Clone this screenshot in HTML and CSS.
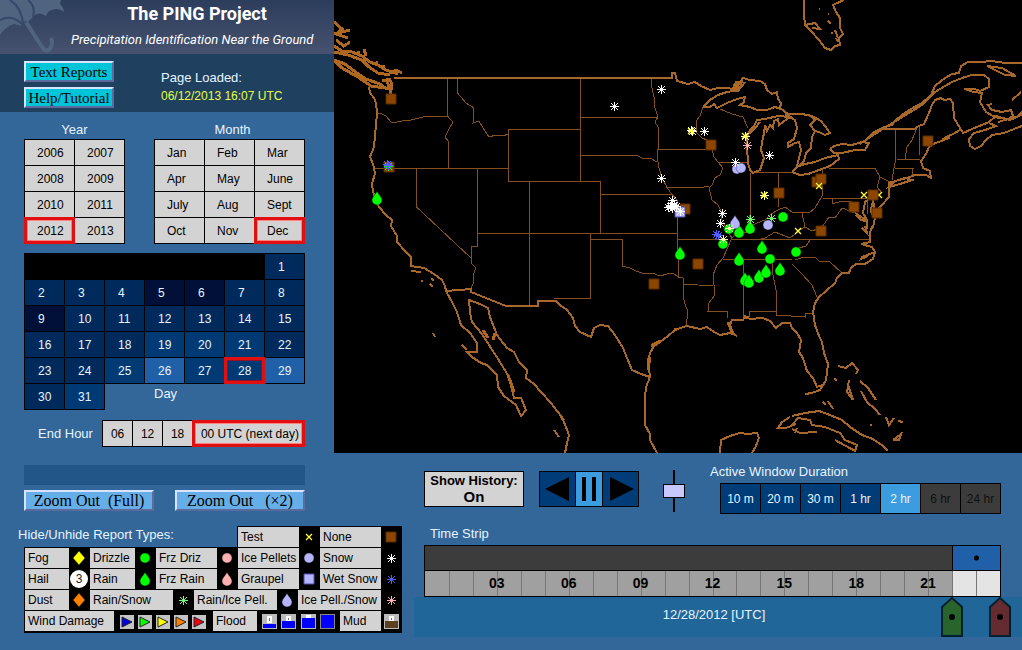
FILE: index.html
```
<!DOCTYPE html>
<html lang="en">
<head>
    <meta charset="UTF-8">
    <meta name="viewport" content="width=device-width, initial-scale=1.0">
    <title>The PING Project</title>
    <link rel="stylesheet" href="styles.css">
</head>
<body>

<!-- Shared report symbols, drawn around 0,0 -->
<svg class="symbols" aria-hidden="true">
    <defs>
        <g id="square"><path d="M-5-5H5V5H-5z" fill="#8c4600" stroke="#5c2c00"/></g>
        <g id="circle"><circle r="5" fill="currentColor" stroke="#000" stroke-opacity=".35"/></g>
        <g id="drop"><path d="M0-7C1-4 5-1 5 2A5 5 0 0 1-5 2C-5-1-1-4 0-7z" fill="currentColor" stroke="#000" stroke-opacity=".35"/></g>
        <g id="diamond"><path d="M0-7L6 0 0 7-6 0z" fill="currentColor" stroke="#000" stroke-opacity=".35"/></g>
        <g id="graupel"><path d="M-5-5H5V5H-5z" fill="#b4b4ff" stroke="#5050b0"/></g>
        <g id="flake"><path d="M.5-4V5M-4 .5H5M-3-3L4 4M-3 4L4-3" stroke="currentColor" fill="none"/></g>
        <g id="cross"><path d="M-3-3L3 3M-3 3L3-3" stroke="#ffff40" stroke-width="1.3" fill="none"/></g>
        <g id="wind"><path d="M0 0H14V14H0z" fill="#c4c4c4"/><path d="M2 2L12 7 2 12z" fill="currentColor" stroke="#222"/></g>
    </defs>
</svg>

<div class="top">
    <div class="sidebar">
        <div class="header">
            <svg class="umbrella" viewBox="0 0 54 54">
                <path d="M0 0H61L60 4Q64 8 64 12Q56 6 48 12L46 16Q38 10 32 18L28 22Q25 19 21 26L14 24Q5 27 0 35z" fill="#50647f"/>
                <path d="M10 0Q22 8 23 24M28 0Q36 6 33 17M0 20Q12 14 22 24" fill="none" stroke="#35476a" stroke-width="2"/>
                <path d="M26 22L42 47Q47 54 51 47Q53 43 51 38" fill="none" stroke="#50647f" stroke-width="4"/>
            </svg>
            <div class="titles">
                <h1>The PING Project</h1>
                <p>Precipitation Identification Near the Ground</p>
            </div>
        </div>

        <div class="links">
            <div class="link-buttons">
                <button class="bevel cyan">Text Reports</button>
                <button class="bevel cyan">Help/Tutorial</button>
            </div>
            <div class="loaded">
                <div>Page Loaded:</div>
                <div class="stamp">06/12/2013 16:07 UTC</div>
            </div>
        </div>

        <div class="pickers">
            <div class="picker">
                <div class="picker-title">Year</div>
                <div class="cells years">
                    <button>2006</button><button>2007</button>
                    <button>2008</button><button>2009</button>
                    <button>2010</button><button>2011</button>
                    <button class="selected">2012</button><button>2013</button>
                </div>
            </div>
            <div class="picker">
                <div class="picker-title">Month</div>
                <div class="cells months">
                    <button>Jan</button><button>Feb</button><button>Mar</button>
                    <button>Apr</button><button>May</button><button>June</button>
                    <button>July</button><button>Aug</button><button>Sept</button>
                    <button>Oct</button><button>Nov</button><button class="selected">Dec</button>
                </div>
            </div>
        </div>

        <div class="cells days">
            <div class="blank"></div>
            <button>1</button>
            <button>2</button><button>3</button><button>4</button><button class="few">5</button><button class="few">6</button><button>7</button><button>8</button>
            <button class="few">9</button><button>10</button><button>11</button><button>12</button><button>13</button><button>14</button><button>15</button>
            <button>16</button><button>17</button><button>18</button><button class="some">19</button><button class="some">20</button><button class="some">21</button><button>22</button>
            <button>23</button><button>24</button><button class="some">25</button><button class="many">26</button><button class="some">27</button><button class="some selected">28</button><button class="many">29</button>
            <button>30</button><button class="some">31</button>
            <div class="day-title">Day</div>
        </div>

        <div class="end-hour">
            <span>End Hour</span>
            <div class="cells hours">
                <button>06</button><button>12</button><button>18</button><button class="selected">00 UTC (next day)</button>
            </div>
        </div>
    </div>

    <svg class="map" viewBox="334 0 688 453" role="img" aria-label="Report map">
        <!-- State lines -->
        <g class="states">
            <path d="M447.500 78V116L450 119 453 122 449 129 445 137 448 141V168"/>
            <path d="M377 113L382 114 386 116 391 122 397 122 402 121 411 120 419 118 427 116H448"/>
            <path d="M374 168.500H508.500M457.500 78V93L466 103 474 108 473 123 479 121 483 128 489 137 496 135 503 136 508 134"/>
            <path d="M508.500 181.500V129.500H580.500M508.500 181.500H600.500M580.500 78V181.500M529.500 181.500V305M477.500 168V246H471V258"/>
            <path d="M416.500 168V207L471 258 472 264 476 268 473 275 474 281 471 289M477.500 233.500H677.500"/>
            <path d="M580.500 117.500H657M651 78L652 88 654 97 655 108 658 117 655 122 658 127V149L657 155 659 168 662 178 667 187 670 192 677 200V239"/>
            <path d="M580.500 155.500H637L642 158 650 158 657 162M658 149.500H711M666 187.500H702L709 186M600.500 181.500V233.500M600.500 194.500H672"/>
            <path d="M590.500 233V298.500H554M590.500 239.500H622.500V266L630 268 636 271 645 274 652 273 660 276 667 274 673 273 678 277 683 278"/>
            <path d="M677.500 239V243L679 278M677.500 239.500H722M683.500 278V298L685 304 688 312 686 327M683.500 284.500L713 285.500"/>
            <path d="M703 107L700 116 696 121 697 133 702 138 707 140 712 149 714 157 718 162 723 168 720 175 715 178 712 185 709 188 712 200 718 205 722 213 721 218 727 230 732 238 727 249 723 258 717 265 713 275 715 295 709 303 708 311H727L728 318"/>
            <path d="M718 162.500H748M720 109L732 114 743 117 748 128M750.500 173V213L747 230M752 172H792M778.500 172V207"/>
            <path d="M732 238L736 234 747 232 750 226 757 223 765 220 771 214 778 210 785 207 792 212 800 212 809 213 815 208 822 196V168M829 168.500H875L880 177 877 187 882 193M880 177L890 182M822.500 198.500H867V214"/>
            <path d="M732 239.500H870M723 259.500H792M743.500 259V317M772 260L773 275 777 295 776 311H749.500V317M776 311V315L805 317V313H812"/>
            <path d="M792 264L802 274 812 285 817 297M795 260L804 257 815 257 819 261 830 262 842 273M794 257L799 248 806 246 810 240M757 240L765 238 775 232 790 238 800 230 805 227 802 213M805 227L812 231 822 227 829 217 835 218 842 208 855 213M832 199V204L842 201 852 202"/>
            <path d="M895.500 129V160L894 168 892 180M917 128L912 140 907 147 905 159M919.500 127V155M897 159.500H920M895 168.500H914M912 168V175M882 129H917"/>
        </g>

        <!-- Coasts, lakes and country borders -->
        <g class="coast">
            <path d="M394 78H672V73H675L677 81 688 84 695 82 701 86 710 90 718 88 727 88 733 89"/>
            <path d="M703 107L710 100 718 95 727 92 733 91 734 85 739 84 743 78 750 80 760 81 765 84 767 90 772 94 777 92 778 99 781 103 780 108 788 114 790 117"/>
            <path d="M703 107L710 107 714 104 717 108 727 103 737 99 745 97 744 102 740 105 750 107 757 110 767 110 775 107 783 110 790 117"/>
            <path d="M733 88L736 82 742 82 740 87 734 91 738 91 745 82"/>
            <path d="M790 117L778 116 765 119 757 120 754 126 750 130 747 138 747 147 748 163 750 170 753 173 760 170 764 158 761 150 762 143 764 133 765 125 767 131 770 125 773 128 774 121 778 119 779 125 787 119 792 117"/>
            <path d="M749 134L755 128 760 122"/>
            <path d="M790 117L795 120 797 128 794 139 788 143 788 147 795 143 799 142 801 150 798 162 797 167 792 172M785 115L792 114 802 114 812 116 821 121 825 126 830 133 825 135 819 132 815 131 810 125 815 120 812 117M815 131L812 137 811 148 806 153 804 161 798 167"/>
            <path d="M797 167L805 164 815 162 825 158 838 155 839 159 830 166 819 170 808 174 800 175 792 172"/>
            <path d="M830 149L834 146 842 144 852 145 862 142 869 143 865 150 855 150 842 153 834 153 830 149"/>
            <path d="M860 144L867 139 874 132 882 128 892 125 896 120 902 115 911 109 922 103 931 95 935 86 945 78 952 74 959 73 961 66 968 62 980 62 992 61 1005 63 1022 63"/>
            <path d="M867 139L886 127 904 116 922 105 935 92 945 86 952 82 962 78 972 75 984 75 989 79 989 87 980 91 975 89 964 89 974 92 982 93 980 102 986 112 993 116 999 118 1008 119 1013 116 1011 110 1002 112 992 110 988 105 992 104"/>
            <path d="M882 129H914L919 126 924 124 929 113 932 105 935 100 941 98 944 100 950 99 953 103 954 118 960 128 963 133 972 129 989 122 996 116 1010 120 1017 117 1022 112"/>
            <path d="M960 130L953 134 946 137 942 141 935 143 929 147 926 154 921 161 923 168 930 171 931 178 926 175 915 175 907 178 895 181 889 187 900 184 912 180 905 178 889 183V197L882 205 875 212 873 200"/>
            <path d="M989 123L996 126 985 130 974 133 969 139 970 146 975 149 981 146 986 140 992 135 1004 133 1014 129 1022 126M987 66L1002 68 1016 76 1005 75 987 66M1012 100L1021 92M998 122L1022 115"/>
            <path d="M870 198L865 202 863 213 867 220 867 229M872 203L871 212 875 218 873 228M855 213L860 216 868 222 861 220 856 215M873 225L870 232 870 242 861 244 872 247 875 252 862 257 861 259 868 256M862 228L867 233 865 226"/>
            <path d="M875 252L873 259 865 264 856 264 851 268 849 273 842 273 837 278 835 283 826 291 819 297 815 303 813 312 815 325 819 336 822 342 824 353 828 364 826 380 820 390 812 393 805 394M825 384L817 387 813 378 807 371 803 358 799 352 801 340 797 333 792 328 790 323 782 323 776 328 770 321 763 318 750 319 745 316 743 320 732 320 730 325 732 331 735 335 730 333 720 335 714 332 707 327 700 329 687 326 680 328 675 330 668 336 660 342 654 346 650 353 648 360 650 377 646 387 645 398 645 425 650 434 650 440 657 453"/>
            <path d="M446 291L471 289V292L506 306H538V301H556L560 305 567 310 573 318 575 326 580 332 591 337 594 328 600 325 608 326 615 335 623 348 627 358 632 370 641 374 650 377"/>
            <path d="M369 87L370 93 374 98 376 103 377 113 376 125 374 147 370 157 373 164 375 173 372 184 373 192 379 207 386 215 392 220 391 226 397 236 397 242 405 251 411 257 411 266 424 268 434 274 442 280 445 286 446 291 452 302 457 312 461 325 470 333 477 343 477 352 467 352 472 357 481 363 487 365 497 375 498 387 504 396 516 405 521 416 526 410 521 398 514 398 509 377 500 362 491 348 482 334 472 322 470 312 469 300 480 304 488 308 490 317 497 335 507 348 514 352 519 362 527 370 526 378 534 384 541 392 551 403 564 420"/>
            <path d="M411 271L421 272M421 281h2M431 279l3 1M430 284l3 3M462 345l5 5M433 333l2 4M554 430l5 7M560 415L564 422 569 435 567 443 565 453"/>
            <path d="M720 453L721 440 730 436 740 433 748 434 757 433 759 438 756 446 752 453M790 417L782 422 778 428 786 428 796 424"/>
            <path d="M792 416L805 413 819 411 830 415 842 420 850 427 862 435 873 439 883 446 888 451M792 425L798 418 810 420 812 425 825 427 840 433 845 440 857 445 855 451 846 446 835 440M792 429L800 433 817 432M797 428L795 433"/>
            <path d="M838 366l8 2 6-5 6 7-2 4M835 378l1 3M848 385l5 15-6-8 2-12M860 381l8 7 8 12M861 391l6 11 8 7 5 6M886 417l3 8 5-7M893 440l8-6-2 6-6 0M898 421l5 1M823 402l3 3M828 401l5 8M871 424v2"/>
            <path d="M804 0L804 15 805 25 811 31 819 40 825 48 831 50 835 46 840 45 839 38 843 34 840 28 840 18 836 12 833 5 844 0M805 25L815 23 820 29 812 28M835 30l3 8M828 21l3 3M836 38l2 4M819 9h1M828 14h1M831 33h2"/>
        </g>
        <g class="fjords">
            <path d="M334 22L342 29 336 34 348 38M334 34L350 30M336 40L344 46 350 42M334 46L342 51 352 52 362 56 370 62 378 65 386 70 398 74"/>
            <path d="M334 52L348 55 362 60 369 67 378 73 390 75M334 60L345 64 354 71 366 79 380 84 385 88 371 86 358 77 342 68 334 60"/>
            <path d="M366 56L364 49M358 54V51M375 64L378 62M384 70L383 65M390 73L396 70 402 73M389 78L392 84 390 95M387 78L389 90M382 80L391 80"/>
            <path d="M731 90L739 85M942 140L950 137M483 330L488 338M495 333L493 340M728 322L733 334M651 346L660 341M675 328v3M745 317h4M508 375L514 392M650 357L648 370"/>
        </g>

        <!-- Reports -->
        <g transform="translate(8 8)">
            <use href="#square" x="383" y="91"/><use href="#square" x="381" y="159"/>
            <use href="#square" x="703" y="137"/><use href="#square" x="646" y="276"/>
            <use href="#square" x="690" y="256"/><use href="#square" x="677" y="201"/>
            <use href="#square" x="771" y="185"/><use href="#square" x="809" y="174"/>
            <use href="#square" x="813" y="171"/><use href="#square" x="813" y="223"/>
            <use href="#square" x="846" y="199"/><use href="#square" x="869" y="205"/>
            <use href="#square" x="920" y="133"/>
            <use href="#cross" x="871" y="187"/><use href="#square" x="865" y="187"/>
            <use href="#cross" x="856" y="187"/><use href="#cross" x="790" y="223"/>
            <use href="#cross" x="811" y="178"/>
            <g class="green">
                <use href="#drop" x="369" y="190"/><use href="#flake" x="380" y="158"/>
                <use href="#drop" x="672" y="245"/><use href="#circle" x="721" y="221"/>
                <use href="#circle" x="715" y="236"/><use href="#drop" x="731" y="223"/>
                <use href="#drop" x="742" y="219"/><use href="#drop" x="754" y="239"/>
                <use href="#drop" x="731" y="251"/><use href="#drop" x="737" y="271"/>
                <use href="#drop" x="741" y="273"/><use href="#drop" x="751" y="268"/>
                <use href="#drop" x="758" y="263"/><use href="#drop" x="772" y="261"/>
                <use href="#circle" x="762" y="251"/><use href="#circle" x="788" y="244"/>
                <use href="#circle" x="775" y="209"/>
            </g>
            <g class="mint">
                <use href="#flake" x="763" y="210"/><use href="#flake" x="742" y="211"/>
            </g>
            <g class="blue">
                <use href="#flake" x="379" y="156"/><use href="#flake" x="380" y="157"/>
                <use href="#flake" x="708" y="226"/><use href="#flake" x="710" y="227"/>
            </g>
            <g class="lavender">
                <use href="#circle" x="729" y="161"/><use href="#circle" x="733" y="160"/>
                <use href="#circle" x="760" y="217"/><use href="#drop" x="727" y="214"/>
                <use href="#graupel" x="672" y="204"/>
            </g>
            <g class="white">
                <use href="#flake" x="606" y="98"/><use href="#flake" x="653" y="81"/>
                <use href="#flake" x="653" y="170"/><use href="#flake" x="696" y="123"/>
                <use href="#flake" x="727" y="154"/><use href="#flake" x="761" y="147"/>
                <use href="#flake" x="714" y="205"/><use href="#flake" x="712" y="215"/>
                <use href="#flake" x="664" y="192"/><use href="#flake" x="660" y="199"/>
                <use href="#flake" x="662" y="198"/><use href="#flake" x="664" y="200"/>
                <use href="#flake" x="666" y="197"/><use href="#flake" x="668" y="198"/>
                <use href="#flake" x="663" y="197"/><use href="#flake" x="672" y="203"/>
                <use href="#flake" x="683" y="122"/>
            </g>
            <g class="cream">
                <use href="#flake" x="684" y="123"/><use href="#flake" x="737" y="128"/>
                <use href="#flake" x="756" y="187"/><use href="#flake" x="721" y="220"/>
                <use href="#flake" x="715" y="231"/><use href="#cross" x="756" y="187"/>
                <use href="#cross" x="737" y="128"/><use href="#cross" x="683" y="123"/>
            </g>
            <use class="pink" href="#flake" x="739" y="137"/>
        </g>
    </svg>
</div>

<div class="bottom">
    <div class="reports-panel">
        <div class="status"></div>
        <div class="zoom-buttons">
            <button class="bevel sky">Zoom Out &nbsp;(Full)</button>
            <button class="bevel sky">Zoom Out &nbsp; (×2)</button>
        </div>

        <div class="legend-head">
            <div class="legend-title">Hide/Unhide Report Types:</div>
            <div class="legend-row">
                <button class="w3">Test</button><svg viewBox="-10 -10 21 20"><use href="#cross"/></svg>
                <button class="w3">None</button><svg viewBox="-10 -10 21 20"><use href="#square"/></svg>
            </div>
        </div>
        <div class="legend">
            <div class="legend-row">
                <button class="w1">Fog</button><svg class="yellow" viewBox="-10 -10 21 20"><use href="#diamond"/></svg>
                <button class="w2">Drizzle</button><svg class="green" viewBox="-10 -10 21 20"><use href="#circle"/></svg>
                <button class="w3">Frz Driz</button><svg class="pink" viewBox="-10 -10 21 20"><use href="#circle"/></svg>
                <button class="w3">Ice Pellets</button><svg class="lavender" viewBox="-10 -10 21 20"><use href="#circle"/></svg>
                <button class="w3">Snow</button><svg class="white" viewBox="-10 -10 21 20"><use href="#flake"/></svg>
            </div>
            <div class="legend-row">
                <button class="w1">Hail</button><span class="hail"><b>3</b></span>
                <button class="w2">Rain</button><svg class="green" viewBox="-10 -10 21 20"><use href="#drop"/></svg>
                <button class="w3">Frz Rain</button><svg class="pink" viewBox="-10 -10 21 20"><use href="#drop"/></svg>
                <button class="w3">Graupel</button><svg viewBox="-10 -10 21 20"><use href="#graupel"/></svg>
                <button class="w3">Wet Snow</button><svg class="blue" viewBox="-10 -10 21 20"><use href="#flake"/></svg>
            </div>
            <div class="legend-row">
                <button class="w1">Dust</button><svg class="orange" viewBox="-10 -10 21 20"><use href="#diamond"/></svg>
                <button class="w4">Rain/Snow</button><svg class="mint" viewBox="-10 -10 21 20"><use href="#flake"/></svg>
                <button class="w4">Rain/Ice Pell.</button><svg class="lavender" viewBox="-10 -10 21 20"><use href="#drop"/></svg>
                <button class="w4">Ice Pell./Snow</button><svg class="pink" viewBox="-10 -10 21 20"><use href="#flake"/></svg>
            </div>
            <div class="legend-row">
                <button class="w5">Wind Damage</button>
                <div class="levels">
                    <svg class="navy"><use href="#wind"/></svg><svg class="green"><use href="#wind"/></svg><svg class="yellow"><use href="#wind"/></svg><svg class="orange"><use href="#wind"/></svg><svg class="red"><use href="#wind"/></svg>
                </div>
                <button class="w1">Flood</button>
                <div class="levels flood">
                    <svg viewBox="0 0 15 15"><path d="M0 0H15V15H0z" fill="#bbb"/><path d="M5 2h5v7H5z" fill="#fff"/><path d="M7 4h1v3H7z" fill="#777"/><path d="M1 10H14V14H1z" fill="#00f"/></svg>
                    <svg viewBox="0 0 15 15"><path d="M0 0H15V15H0z" fill="#bbb"/><path d="M5 2h5v5H5z" fill="#fff"/><path d="M7 4h1v2H7z" fill="#777"/><path d="M1 7H14V14H1z" fill="#00f"/></svg>
                    <svg viewBox="0 0 15 15"><path d="M0 0H15V15H0z" fill="#bbb"/><path d="M5 1h5v3H5z" fill="#fff"/><path d="M1 4H14V14H1z" fill="#00f"/></svg>
                    <svg viewBox="0 0 15 15"><path d="M0 0H15V15H0z" fill="#888"/><path d="M1 1H14V14H1z" fill="#00f"/></svg>
                </div>
                <button class="w6">Mud</button>
                <svg viewBox="-3 -3 21 20"><path d="M0 0H15V15H0z" fill="#bbb"/><path d="M5 2h5v5H5z" fill="#fff"/><path d="M7 4h1v2H7z" fill="#777"/><path d="M1 7H14V14H1z" fill="#5c4020"/></svg>
            </div>
        </div>
    </div>

    <div class="time-panel">
        <div class="controls">
            <button class="history">Show History:<strong>On</strong></button>
            <div class="player">
                <button aria-label="Back"><svg viewBox="0 0 35 34"><path d="M5 17L29 5V29z"/></svg></button>
                <button class="active" aria-label="Pause"><svg viewBox="0 0 26 34"><path d="M6 5h4v24H6zM16 5h4v24h-4z"/></svg></button>
                <button aria-label="Forward"><svg viewBox="0 0 35 34"><path d="M31 17L7 5V29z"/></svg></button>
            </div>
            <input class="speed" type="range" min="0" max="100" value="50" aria-label="Speed">
            <div class="duration">
                <div class="duration-title">Active Window Duration</div>
                <div class="cells durations">
                    <button>10 m</button><button>20 m</button><button>30 m</button><button>1 hr</button><button class="active">2 hr</button><button disabled>6 hr</button><button disabled>24 hr</button>
                </div>
            </div>
        </div>

        <div class="strip-title">Time Strip</div>
        <div class="strip">
            <div class="window-row"><div class="window"></div></div>
            <div class="ticks">
                <i></i><i></i><i></i><i></i><i></i><i></i><i></i><i></i><i></i><i></i><i></i><i></i>
                <i></i><i></i><i></i><i></i><i></i><i></i><i></i><i></i><i></i><i></i><i class="on"></i><i class="on"></i>
            </div>
            <div class="tick-labels">
                <b>03</b><b>06</b><b>09</b><b>12</b><b>15</b><b>18</b><b>21</b>
            </div>
            <svg class="marker start" viewBox="0 0 22 40"><path d="M1 10L11 1 21 10V39H1z"/><circle cx="11" cy="20" r="3"/></svg>
            <svg class="marker end" viewBox="0 0 22 40"><path d="M1 10L11 1 21 10V39H1z"/><circle cx="11" cy="20" r="3"/></svg>
        </div>
        <div class="date">12/28/2012 [UTC]</div>
    </div>
</div>

</body>
</html>
```
FILE: styles.css
```
* {
    box-sizing: border-box;
}

body {
    margin: 0;
    background: #336699;
    color: #e6f5ff;
    font-family: "Liberation Sans", Arial, sans-serif;
    font-size: 13px;
    line-height: 18px;
}

button {
    margin: 0;
    padding: 0;
    border: 1px solid #000;
    border-radius: 0;
    background: #d3d3d3;
    color: #000;
    font-family: inherit;
    font-size: 12px;
    cursor: pointer;
    white-space: nowrap;
}

.symbols {
    position: absolute;
    width: 0;
    height: 0;
}

.top {
    display: grid;
    grid-template-columns: 334px minmax(0, 1fr);
}

/* Header */
.header {
    display: flex;
    height: 54px;
    background: linear-gradient(#2c3d5b, #46526f);
}

.umbrella {
    width: 54px;
    height: 54px;
    overflow: visible;
}

.titles {
    flex: 1;
    margin-left: 17px;
    font-family: Roboto, "Liberation Sans", sans-serif;
    color: #fff;
    white-space: nowrap;
}

.titles h1 {
    margin: 0;
    padding-top: 2px;
    width: 252px;
    text-align: center;
    font-size: 18px;
    line-height: 24px;
}

.titles p {
    margin: 4px 0 0;
    font-size: 13px;
    line-height: 20px;
    font-style: italic;
}

.links {
    display: flex;
    height: 58px;
    padding-left: 24px;
    background: #204060;
}

.link-buttons {
    display: flex;
    flex-direction: column;
    gap: 5px;
    width: 137px;
    padding-top: 7px;
}

.bevel {
    height: 21px;
    border: 2px solid;
    border-color: #d8e4ff #5d6a9c #5d6a9c #d8e4ff;
    font-family: "Liberation Serif", "Times New Roman", serif;
    font-size: 16px;
    line-height: 16px;
}

.cyan {
    width: 90px;
    background: #00c4d8;
    font-size: 15px;
}

.sky {
    width: 130px;
    background: #66aee8;
}

.loaded {
    padding-top: 15px;
}

.stamp {
    color: #e8ff40;
    font-size: 12px;
}

/* Date pickers */
.pickers {
    display: flex;
    gap: 29px;
    padding: 9px 0 0 24px;
}

.picker-title {
    text-align: center;
}

.picker:last-child .picker-title {
    padding-left: 6px;
}

.cells {
    display: grid;
    grid-auto-rows: 26px;
    padding: 0 1px 1px 0;
}

.cells button {
    position: relative;
    margin: 0 -1px -1px 0;
    padding-left: 12px;
    text-align: left;
}

.cells .selected {
    z-index: 1;
    border-color: #e01010;
    box-shadow: inset 0 0 0 2px #e01010, inset 0 0 0 3px #ff8080;
}

.years {
    grid-template-columns: repeat(2, 50px);
}

.months {
    grid-template-columns: repeat(3, 50px);
}

.days {
    grid-template-columns: repeat(7, 40px);
    margin: 9px 0 0 24px;
}

.days button {
    padding-left: 13px;
    background: #00295c;
    color: #e6f5ff;
}

.days .few {
    background: #001038;
}

.days .some {
    background: #003a74;
}

.days .many {
    background: #2060a8;
}

.days .selected {
    box-shadow: inset 0 0 0 2px #e01010, inset 0 0 0 3px #901030;
}

.blank {
    grid-column: span 6;
    background: #000;
}

.day-title {
    grid-column: 4 / span 2;
    padding: 2px 0 0 10px;
}

.end-hour {
    display: flex;
    align-items: center;
    gap: 9px;
    margin: 10px 0 6px 38px;
}

.hours {
    grid-template-columns: repeat(3, 30px) 112px;
}

.hours button {
    padding-left: 8px;
}

/* Map */
.map {
    display: block;
    width: 100%;
    height: auto;
    background: #000;
}

.states {
    fill: none;
    stroke: #84501f;
    shape-rendering: crispEdges;
}

.coast {
    fill: none;
    stroke: #a8682c;
    stroke-width: 2;
    shape-rendering: crispEdges;
}

.fjords {
    fill: none;
    stroke: #b06820;
    stroke-width: 3;
    shape-rendering: crispEdges;
}

.green { color: #00ff00; }
.mint { color: #70ff70; }
.blue { color: #5060ff; }
.navy { color: #0000e0; }
.lavender { color: #b4b4ff; }
.white { color: #fff; }
.cream { color: #ffffb0; }
.pink { color: #ffb0b0; }
.yellow { color: #ffff00; }
.orange { color: #ff8000; }
.red { color: #f00010; }

/* Report types */
.bottom {
    display: grid;
    grid-template-columns: 414px minmax(0, 1fr);
}

.reports-panel {
    padding: 12px 12px 18px 24px;
}

.status {
    width: 281px;
    height: 20px;
    background: #225588;
}

.zoom-buttons {
    display: flex;
    gap: 21px;
    margin: 5px 0 15px;
}

.legend-head {
    display: flex;
    justify-content: space-between;
    margin-left: -6px;
}

.legend-head .legend-row {
    border: solid #000;
    border-width: 1px 0 0 1px;
}

.legend {
    border: 1px solid #000;
    border-right: 0;
}

.legend-row {
    display: flex;
    height: 21px;
    background: #000;
}

.legend-row button {
    height: 20px;
    padding-left: 3px;
    border: 0;
    text-align: left;
}

.w1 { width: 44px; }
.w2 { width: 45px; }
.w3 { width: 61px; }
.w4 { width: 83px; }
.w5 { width: 89px; }
.w6 { width: 41px; }

.legend-row > svg,
.hail {
    width: 21px;
    height: 20px;
}

.hail {
    padding: 1px;
}

.hail b {
    display: block;
    width: 18px;
    height: 18px;
    border-radius: 50%;
    background: #fff;
    color: #222;
    font-size: 12px;
    font-weight: normal;
    text-align: center;
}

.levels {
    display: flex;
    justify-content: space-between;
    align-items: center;
    width: 99px;
    padding: 0 7px 0 6px;
}

.levels svg {
    width: 14px;
    height: 14px;
}

.flood {
    width: 83px;
    padding: 0 5px;
}

.flood svg {
    width: 15px;
    height: 15px;
}

/* Playback and time strip */
.time-panel {
    padding: 10px 0 13px;
}

.controls {
    display: flex;
    align-items: flex-start;
    padding: 0 21px 0 10px;
}

.history {
    width: 100px;
    height: 36px;
    margin-top: 8px;
    font-size: 13px;
    font-weight: bold;
    line-height: 16px;
}

.history strong {
    display: block;
    font-size: 15px;
}

.player {
    display: flex;
    height: 36px;
    margin: 8px 0 0 15px;
    border: 1px solid #000;
}

.player button {
    width: 35px;
    border: 0;
    background: #003c78;
}

.player .active {
    width: 28px;
    border: solid #000;
    border-width: 0 1px;
    background: #3c9ce0;
}

.player svg {
    display: block;
    width: 100%;
}

.speed {
    -webkit-appearance: none;
    appearance: none;
    writing-mode: vertical-lr;
    width: 22px;
    height: 42px;
    margin: 7px 0 0 24px;
    background: linear-gradient(#000, #000) center / 2px 100% no-repeat;
}

.speed::-webkit-slider-thumb {
    -webkit-appearance: none;
    width: 22px;
    height: 14px;
    border: 1px solid #000;
    background: #c8c8ff;
}

.duration {
    margin-left: auto;
}

.duration-title {
    margin: 0 0 2px -10px;
}

.durations {
    grid-template-columns: repeat(7, 40px);
    grid-auto-rows: 30px;
}

.durations button {
    padding-left: 0;
    text-align: center;
    background: #003c78;
    color: #e6f5ff;
}

.durations .active {
    background: #3c9ce0;
}

.durations button:disabled {
    background: #3c3c3c;
    color: #101010;
}

.strip-title {
    margin: 11px 0 2px 16px;
}

.strip {
    position: relative;
    margin: 0 21px 0 10px;
    border: 1px solid #000;
}

.window-row {
    display: flex;
    justify-content: flex-end;
    height: 25px;
    border-bottom: 1px solid #000;
    background: #3c3c3c;
}

.window {
    width: 8.4%;
    border-left: 1px solid #000;
    background: radial-gradient(circle, #000 2px, #2060a8 3px);
}

.ticks {
    display: grid;
    grid-template-columns: repeat(24, 1fr);
    height: 25px;
    background: #a0a0a0;
}

.ticks i + i {
    border-left: 1px solid #777;
}

.ticks .on {
    background: #e4e4e4;
}

.tick-labels {
    display: grid;
    grid-template-columns: repeat(8, 1fr);
    /* Pull the labels over the ticks, each centred on its hour line */
    margin-top: -25px;
    padding-left: 6.25%;
    margin-right: -6.25%;
    width: 106.25%;
    color: #000;
    font-size: 14px;
    line-height: 25px;
    text-align: center;
    pointer-events: none;
}

.tick-labels b {
    position: relative;
}

.marker {
    position: absolute;
    z-index: 1;
    top: 51px;
    width: 22px;
    height: 40px;
    margin-left: -11px;
    fill: #28642c;
    stroke: #002030;
    stroke-width: 2;
}

.marker circle {
    fill: #000;
    stroke: none;
}

.start {
    left: 91.66%;
}

.end {
    left: 100%;
    fill: #642c30;
}

.date {
    height: 40px;
    padding-right: 8px;
    background: #206699;
    line-height: 36px;
    text-align: center;
}
```
